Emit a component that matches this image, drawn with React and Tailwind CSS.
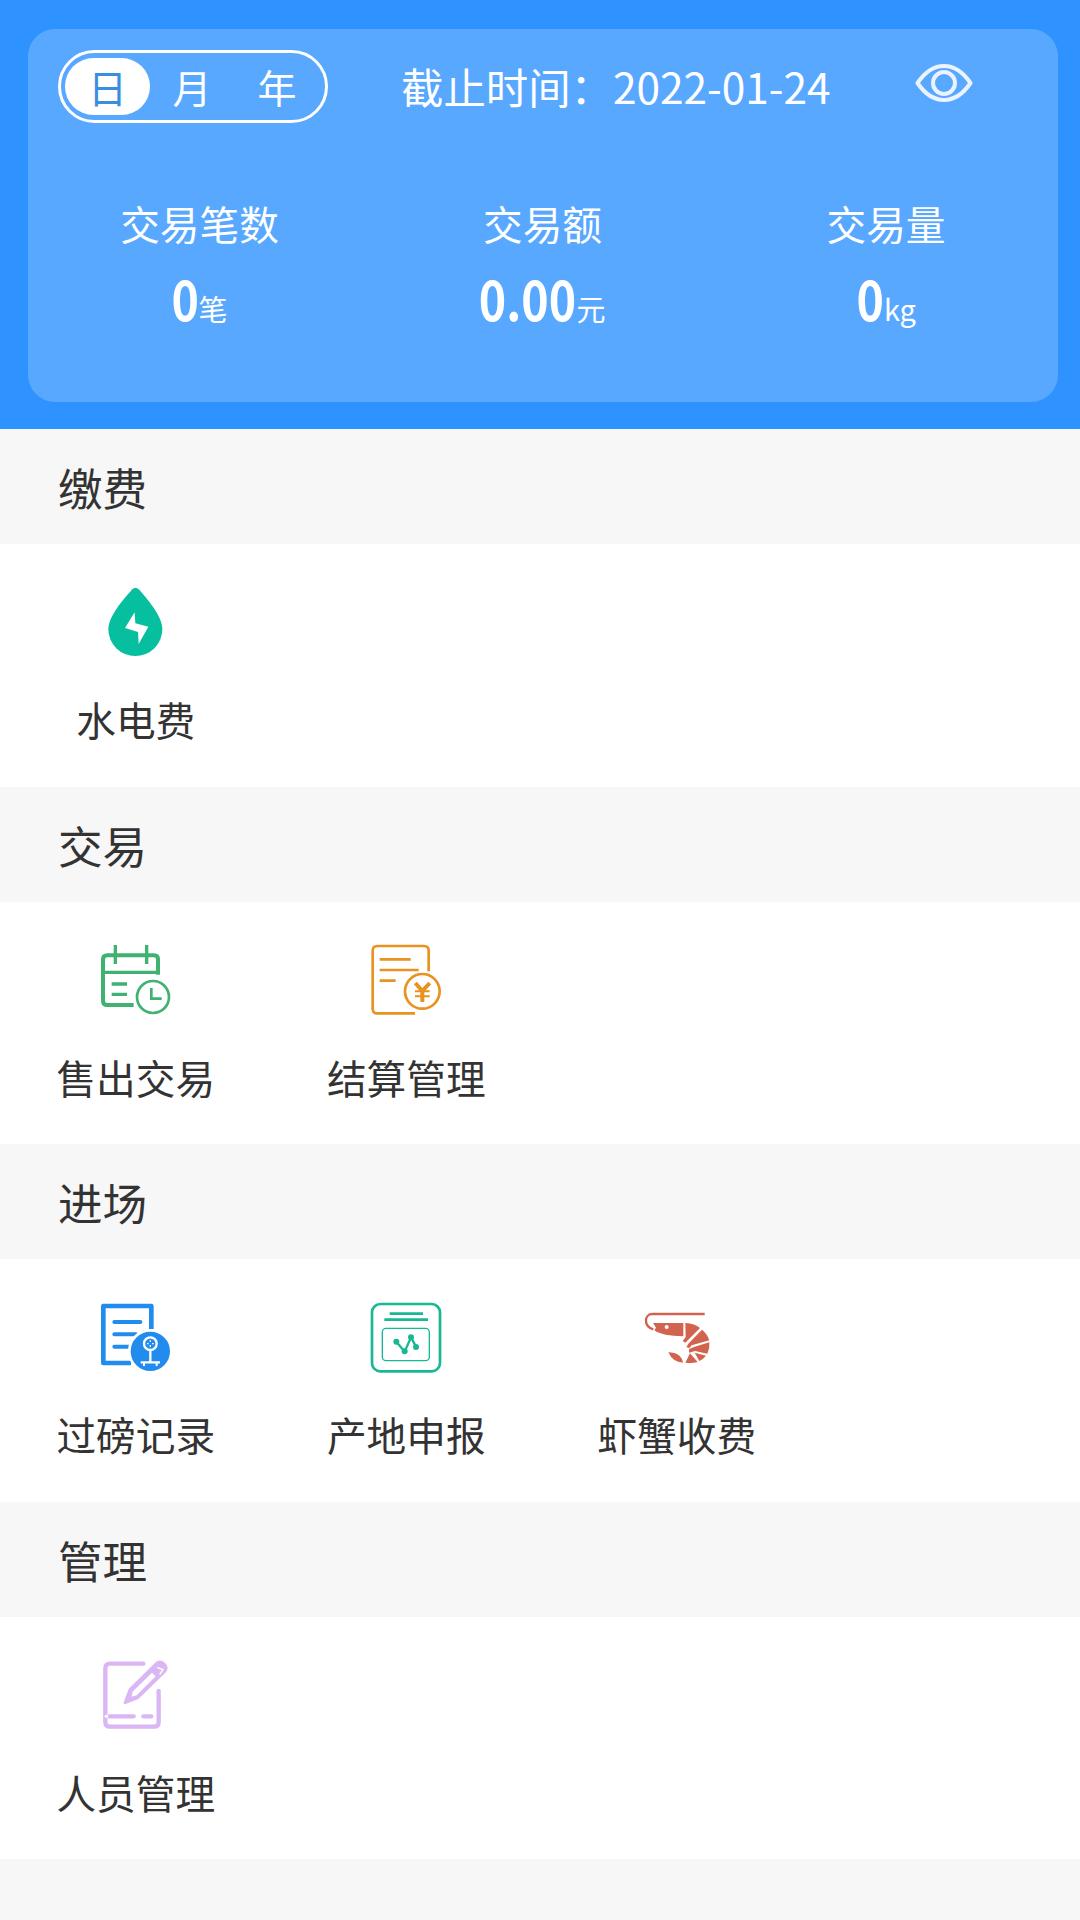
import React from "react";

const ElectricWaterIcon = () => (
  <svg className="h-20 w-20" viewBox="15 30 240 240" fill="none">
    <path
      d="M127 58 Q136 49 146 58 C171 86 217 139 217 178 A81 80 0 0 1 55 178 C55 139 101 87 127 58 Z"
      fill="#06bf9f"
    />
    <path d="M134 127 L105 174 L144 186 L146 222 L175 170 L136 160 Z" fill="#fff" />
  </svg>
);

const SoldIcon = () => (
  <svg className="h-20 w-20" viewBox="15 24 240 240" fill="none" stroke="#3fb271">
    <path d="M204 134 V88 Q204 76 192 76 H52 Q39 76 39 89 V212 Q39 225 52 225 H131" strokeWidth="12" />
    <path d="M39 127 H208 M65 162 H111 M65 193 H111" strokeWidth="10" />
    <path d="M76 45 V102 M170 45 V102" strokeWidth="10" />
    <circle cx="189" cy="201" r="48" strokeWidth="8" />
    <path d="M184 174 V206 H215" strokeWidth="8" />
  </svg>
);

const SettlementIcon = () => (
  <svg className="h-20 w-20" viewBox="34 24 240 240" fill="none" stroke="#e8921f">
    <path
      d="M222 124 V62 Q222 48 208 48 H68 Q54 48 54 62 V236 Q54 250 68 250 H181"
      strokeWidth="8"
    />
    <path d="M75 88 H168 M75 120 H192 M75 152 H123" strokeWidth="8" />
    <circle cx="203" cy="184" r="52" strokeWidth="8" />
    <path d="M182 159 L203 183 L225 159 M203 181 V216" strokeWidth="12" />
    <path d="M181 184 H225 M181 199 H225" strokeWidth="6" />
  </svg>
);

const WeighIcon = () => (
  <svg className="h-20 w-20" viewBox="15 15 240 240" fill="none" stroke="#228bee">
    <path d="M184 118 V48 H40 V219 H123" strokeWidth="14" strokeLinejoin="round" />
    <path d="M73 96 H151 M73 133 H138 M73 170 H118" strokeWidth="12" strokeLinecap="round" />
    <circle cx="181" cy="184" r="63" fill="#228bee" stroke="#fff" strokeWidth="8" />
    <circle cx="181" cy="161" r="19" stroke="#fff" strokeWidth="7" />
    <path d="M181 151 V156 M181 165 V171 M171 161 H176 M186 161 H191" stroke="#fff" strokeWidth="4" />
    <path d="M181 181 V216 M152 217 H210" stroke="#fff" strokeWidth="7" />
    <path d="M162 217 V228 M200 217 V228" stroke="#fff" strokeWidth="6" />
  </svg>
);

const OriginIcon = () => (
  <svg className="h-20 w-20" viewBox="33 15 240 240" fill="none" stroke="#17b893">
    <rect x="51" y="42" width="204" height="202" rx="25" strokeWidth="8" />
    <path d="M104 71 H204 M88 89 H219" strokeWidth="8" />
    <rect x="82" y="115" width="141" height="97" rx="11" strokeWidth="4" />
    <path d="M124 155 L149 185 L168 142 L183 170" strokeWidth="7" />
    <g fill="#17b893" stroke="none">
      <circle cx="124" cy="155" r="9" />
      <circle cx="149" cy="184" r="9" />
      <circle cx="168" cy="142" r="9" />
      <circle cx="183" cy="171" r="9" />
    </g>
  </svg>
);

const ShrimpIcon = () => (
  <svg className="h-20 w-20" viewBox="17 15 240 240" fill="none">
    <path d="M223 72 H66 C42 72 38 108 69 118" stroke="#d2634f" strokeWidth="7" />
    <g fill="#d2634f">
      <path d="M68 99 H159 V139 C118 138 88 133 72 121 L77 113 Z" />
      <path d="M165 99 Q193 100 209 114 L165 158 L157 153 L166 141 Z" />
      <path d="M215 119 Q231 132 237 151 L184 166 L177 174 L168 172 L174 161 Z" />
      <path d="M237 157 Q239 174 231 191 L194 183 L176 188 V177 L191 171 Z" />
      <path d="M193 188 L227 197 Q219 207 207 213 Z" />
      <path d="M179 190 L202 216 Q186 221 165 218 Z" />
      <path d="M114 187 Q153 188 158 218 Q127 217 114 187 Z" />
    </g>
    <circle cx="109" cy="111" r="6" fill="#fff" />
  </svg>
);

const StaffIcon = () => (
  <svg className="h-20 w-20" viewBox="15 23 240 240" fill="none" stroke="#dab6f5" strokeLinecap="round">
    <path d="M160 55 H60 Q46 55 46 69 V230 Q46 244 60 244 H192 Q206 244 206 230 V137" strokeWidth="13" />
    <path d="M59 213 H131 M160 213 H184" strokeWidth="13" />
    <circle cx="49" cy="213" r="5" fill="#fff" stroke="none" />
    <path
      d="M105 172 L120 132 L199 54 Q210 45 222 55 Q234 67 224 79 L144 157 Z"
      fill="#dab6f5"
      strokeWidth="8"
      strokeLinejoin="round"
    />
    <path d="M186 82 L197 93 L140 150 L124 154 L129 138 Z" fill="#fff" stroke="none" />
    <path d="M203 67 L219 73 L210 86" stroke="#fff" strokeWidth="4" />
  </svg>
);

const EyeIcon = () => (
  <svg className="h-[38px] w-[58px]" viewBox="0 0 58 38" fill="none" stroke="#eaf3ff" strokeWidth="4">
    <path d="M2.5 19 C10 8 19 2 29 2 S48 8 55.5 19 C48 30 39 36 29 36 S10 30 2.5 19 Z" strokeLinejoin="round" />
    <circle cx="29" cy="19" r="11" />
  </svg>
);

const stats = [
  { label: "交易笔数", value: "0", unit: "笔", width: "w-[343px]", pull: "-ml-[5px]" },
  { label: "交易额", value: "0.00", unit: "元", width: "w-[343px]", pull: "-ml-[16px]" },
  { label: "交易量", value: "0", unit: "kg", width: "w-[344px]", pull: "-ml-[4px]" },
];

const sections = [
  { title: "缴费", items: [{ name: "水电费", Icon: ElectricWaterIcon }] },
  {
    title: "交易",
    items: [
      { name: "售出交易", Icon: SoldIcon },
      { name: "结算管理", Icon: SettlementIcon },
    ],
  },
  {
    title: "进场",
    items: [
      { name: "过磅记录", Icon: WeighIcon },
      { name: "产地申报", Icon: OriginIcon },
      { name: "虾蟹收费", Icon: ShrimpIcon },
    ],
  },
  { title: "管理", items: [{ name: "人员管理", Icon: StaffIcon }] },
];

const Summary = () => (
  <div className="h-[429px] bg-[#2e92ff] pt-[29px] pr-[22px] pl-7 text-white">
    <div className="h-[373px] rounded-[27px] bg-[#59a8ff]">
      <div className="flex items-start pt-[21px] pl-[30px]">
        <div className="flex h-[73px] w-[270px] items-center rounded-full border-3 border-white pl-1 text-[39px]">
          <div className="flex h-[57px] w-[85px] items-center justify-center rounded-full bg-white text-[#3a8ee0]">
            日
          </div>
          <div className="w-[84px] text-center">月</div>
          <div className="w-[86px] text-center">年</div>
        </div>
        <div className="ml-[73px] w-[514px] text-[42.4px] leading-[71px] whitespace-nowrap">
          截止时间：2022-01-24
        </div>
        <div className="pt-[14px]">
          <EyeIcon />
        </div>
      </div>
      <div className="mt-[70px] flex">
        {stats.map((stat) => (
          <div className={`${stat.width} text-center`} key={stat.label}>
            <div className="text-[39.7px] leading-[60px]">{stat.label}</div>
            <div className="mt-[5px] leading-[80px] whitespace-nowrap">
              <span className={`${stat.pull} inline-block origin-right scale-x-[0.86] text-[54px] font-bold`}>
                {stat.value}
              </span>
              <span className="text-[29px]">{stat.unit}</span>
            </div>
          </div>
        ))}
      </div>
    </div>
  </div>
);

const App = () => {
  return (
    <div
      lang="zh-CN"
      className="min-h-[1920px] w-[1080px] overflow-hidden bg-[#f7f7f7] font-['Noto_Sans_CJK_SC',sans-serif] text-[#333]"
    >
      <Summary />
      {sections.map((section) => (
        <div key={section.title}>
          <h2 className="h-[115px] pl-[58px] text-[44.6px] leading-[116px]">{section.title}</h2>
          <div className="grid h-[242.5px] grid-cols-[repeat(4,270.5px)] bg-white pt-9">
            {section.items.map(({ name, Icon }) => (
              <div className="flex flex-col items-center" key={name}>
                <Icon />
                <span className="mt-[29px] pl-px text-[39.7px] leading-[60px]">{name}</span>
              </div>
            ))}
          </div>
        </div>
      ))}
    </div>
  );
};

export default App;
